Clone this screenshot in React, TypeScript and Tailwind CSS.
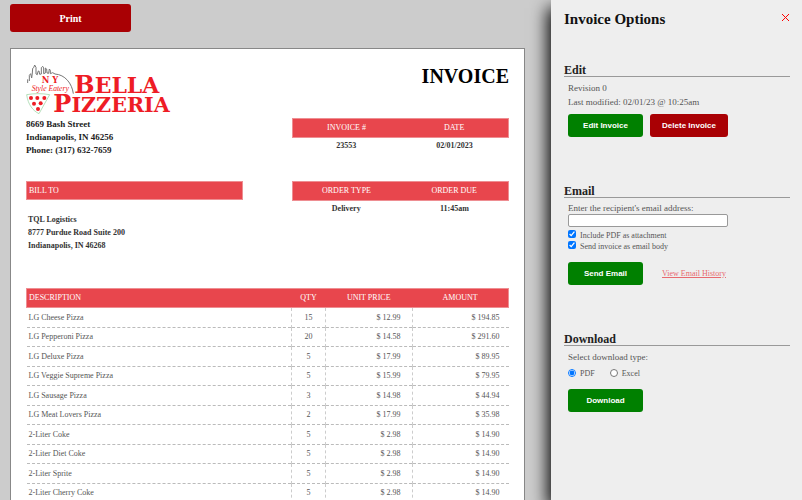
import type { ReactNode } from 'react';

const items = [
  ['LG Cheese Pizza', '15', '12.99', '194.85'],
  ['LG Pepperoni Pizza', '20', '14.58', '291.60'],
  ['LG Deluxe Pizza', '5', '17.99', '89.95'],
  ['LG Veggie Supreme Pizza', '5', '15.99', '79.95'],
  ['LG Sausage Pizza', '3', '14.98', '44.94'],
  ['LG Meat Lovers Pizza', '2', '17.99', '35.98'],
  ['2-Liter Coke', '5', '2.98', '14.90'],
  ['2-Liter Diet Coke', '5', '2.98', '14.90'],
  ['2-Liter Sprite', '5', '2.98', '14.90'],
  ['2-Liter Cherry Coke', '5', '2.98', '14.90'],
];

function Logo() {
  return (
    <svg viewBox="78 192 438 153" className="block h-[51px] w-[146px] overflow-visible" role="img" aria-label="Bella Pizzeria">
      <path
        d="M83 249V238M88 243V226L92 221L95 234L97 219L98 205L101 203L104 195L108 202V222L112 224L114 214L117 213L119 223L124 222V203L128 199L131 204V221L136 219V204L140 207L141 219L146 220L148 207L151 211V221L158 218L165 222C195 224 216 250 220 281"
        fill="none"
        stroke="#777"
        strokeWidth="3"
      />
      <path d="M80 284C103 280 126 280 149 284L117 341C100 333 84 315 80 284Z" fill="none" stroke="#8fce98" strokeWidth="2" />
      <g fill="#ee1c25">
        <circle cx="93" cy="294" r="6" />
        <circle cx="112" cy="294" r="6" />
        <circle cx="133" cy="294" r="6" />
        <circle cx="102" cy="311" r="6" />
        <circle cx="122" cy="310" r="6" />
        <circle cx="114" cy="327" r="6" />
        <g fontFamily="'DejaVu Serif', serif" fontWeight="700">
          <text x="125" y="248" fontSize="25">N Y</text>
          <text x="223" y="279" fontSize="72">
            B<tspan fontSize="66">ELLA</tspan>
          </text>
          <text x="160" y="337" fontSize="72">
            P<tspan fontSize="62">IZZERIA</tspan>
          </text>
        </g>
        <text x="95" y="273" fontSize="23" fontStyle="italic" fontFamily="'Liberation Serif', serif">
          Style Eatery
        </text>
      </g>
    </svg>
  );
}

function SummaryTable({ heads, values }: { heads: string[]; values: string[] }) {
  return (
    <table className="w-full table-fixed border-collapse text-center text-[8px] leading-[10px]">
      <thead>
        <tr className="h-[19px] border border-[#ee8e92] bg-[#e8464d] text-white">
          {heads.map((head) => (
            <th key={head} className="p-0 font-normal">{head}</th>
          ))}
        </tr>
      </thead>
      <tbody>
        <tr className="h-[17px] text-[#333]">
          {values.map((value) => (
            <td key={value} className="p-0 font-bold">{value}</td>
          ))}
        </tr>
      </tbody>
    </table>
  );
}

function Section({ title, children }: { title: string; children: ReactNode }) {
  return (
    <section>
      <h3 className="border-b border-[#999] text-[12px] leading-3 font-bold text-[#222]">{title}</h3>
      <div className="px-1 pt-1">{children}</div>
    </section>
  );
}

function ActionButton({ color, children }: { color: string; children: ReactNode }) {
  return (
    <button
      type="button"
      className={`h-[23px] rounded-[3px] font-['Liberation_Sans',sans-serif] text-[8px] font-bold text-white ${color}`}
    >
      {children}
    </button>
  );
}

export default function App() {
  return (
    <div className="flex h-screen overflow-hidden bg-[#ccc] font-['Liberation_Serif',serif] text-[#555]">
      <main className="min-w-0 flex-1 pt-1 pr-[26px] pl-[10px]">
        <button type="button" className="block h-7 w-[121px] rounded-[3px] bg-[#a90004] text-[10px] font-bold text-white">
          Print
        </button>

        <article className="mt-4 min-h-screen border border-[#888] bg-white px-[15px] pt-[15px]">
          <header className="flex justify-between">
            <div>
              <Logo />
              <address className="pt-[3px] text-[9px] leading-[13px] font-bold text-[#222] not-italic">
                8669 Bash Street
                <br />
                Indianapolis, IN 46256
                <br />
                Phone: (317) 632-7659
              </address>
            </div>
            <div className="w-[45%]">
              <h1 className="mb-[30px] text-right text-[20px] leading-6 font-bold text-black">INVOICE</h1>
              <SummaryTable heads={['INVOICE #', 'DATE']} values={['23553', '02/01/2023']} />
            </div>
          </header>

          <div className="mt-6 flex justify-between text-[8px]">
            <div className="w-[45%]">
              <h2 className="border border-[#ee8e92] bg-[#e8464d] px-[2px] leading-[17px] text-white">BILL TO</h2>
              <address className="mt-[13px] pl-[2px] leading-[13px] font-bold text-[#333] not-italic">
                TQL Logistics
                <br />
                8777 Purdue Road Suite 200
                <br />
                Indianapolis, IN 46268
              </address>
            </div>
            <div className="w-[45%]">
              <SummaryTable heads={['ORDER TYPE', 'ORDER DUE']} values={['Delivery', '11:45am']} />
            </div>
          </div>

          <table className="mt-9 w-full table-fixed border-collapse text-[8px] leading-[10px]">
            <thead>
              <tr className="h-[19px] border border-[#ee8e92] bg-[#e8464d] text-white">
                <th className="w-[55%] p-0 pl-[2px] text-left font-normal">DESCRIPTION</th>
                <th className="w-[7%] p-0 font-normal">QTY</th>
                <th className="w-[18%] p-0 font-normal">UNIT PRICE</th>
                <th className="w-[20%] p-0 font-normal">AMOUNT</th>
              </tr>
            </thead>
            <tbody>
              {items.map(([name, qty, price, amount]) => (
                <tr key={name} className="border-b border-dashed border-[#bbb] odd:h-5 even:h-[19px]">
                  <td className="p-0 pl-[2px]">{name}</td>
                  <td className="border-x border-dashed border-[#ccc] p-0 text-center">{qty}</td>
                  <td className="border-r border-dashed border-[#ccc] p-0 pr-[11px] text-right">$ {price}</td>
                  <td className="p-0 pr-[9px] text-right">$ {amount}</td>
                </tr>
              ))}
            </tbody>
          </table>
        </article>
      </main>

      <aside className="w-[251px] shrink-0 bg-[#eee] pt-[9px] pr-3 pl-[13px] text-[9px] shadow-[-3px_8px_16px_0_#000]">
        <header className="flex items-start justify-between">
          <h2 className="text-[15px] leading-5 font-bold text-[#111]">Invoice Options</h2>
          <button type="button" aria-label="Close" className="mt-1">
            <svg viewBox="0 0 9 9" className="block size-[9px]" fill="none" stroke="#f00" strokeWidth="1">
              <path d="M1 1L8 8M8 1L1 8" />
            </svg>
          </button>
        </header>

        <div className="mt-[35px] flex flex-col gap-12">
          <Section title="Edit">
            <p className="leading-[14px]">Revision 0</p>
            <p className="leading-[14px]">Last modified: 02/01/23 @ 10:25am</p>
            <div className="mt-[5px] flex gap-[7px]">
              <ActionButton color="w-[75px] bg-[#008000]">Edit Invoice</ActionButton>
              <ActionButton color="w-[78px] bg-[#a90004]">Delete Invoice</ActionButton>
            </div>
          </Section>

          <Section title="Email">
            <label htmlFor="recipient" className="block leading-3">Enter the recipient's email address:</label>
            <input
              id="recipient"
              type="email"
              className="block h-[13px] w-40 rounded-[2px] border border-[#999] bg-white px-1"
            />
            <div className="mt-[3px] text-[8px] leading-[11px]">
              <label className="flex gap-1">
                <input type="checkbox" defaultChecked className="size-2" />
                Include PDF as attachment
              </label>
              <label className="flex gap-1">
                <input type="checkbox" defaultChecked className="size-2" />
                Send invoice as email body
              </label>
            </div>
            <div className="mt-[10px] flex items-center gap-[19px]">
              <ActionButton color="w-[75px] bg-[#008000]">Send Email</ActionButton>
              <a href="#history" className="text-[8px] text-[#e86a6f] underline">View Email History</a>
            </div>
          </Section>

          <Section title="Download">
            <fieldset>
              <legend className="leading-[14px]">Select download type:</legend>
              <div className="mt-1 flex gap-[15px] text-[8px] leading-3">
                <label className="flex gap-1">
                  <input type="radio" name="format" defaultChecked className="mt-px size-2" />
                  PDF
                </label>
                <label className="flex gap-1">
                  <input type="radio" name="format" className="mt-px size-2" />
                  Excel
                </label>
              </div>
            </fieldset>
            <div className="mt-[9px] flex">
              <ActionButton color="w-[75px] bg-[#008000]">Download</ActionButton>
            </div>
          </Section>
        </div>
      </aside>
    </div>
  );
}
